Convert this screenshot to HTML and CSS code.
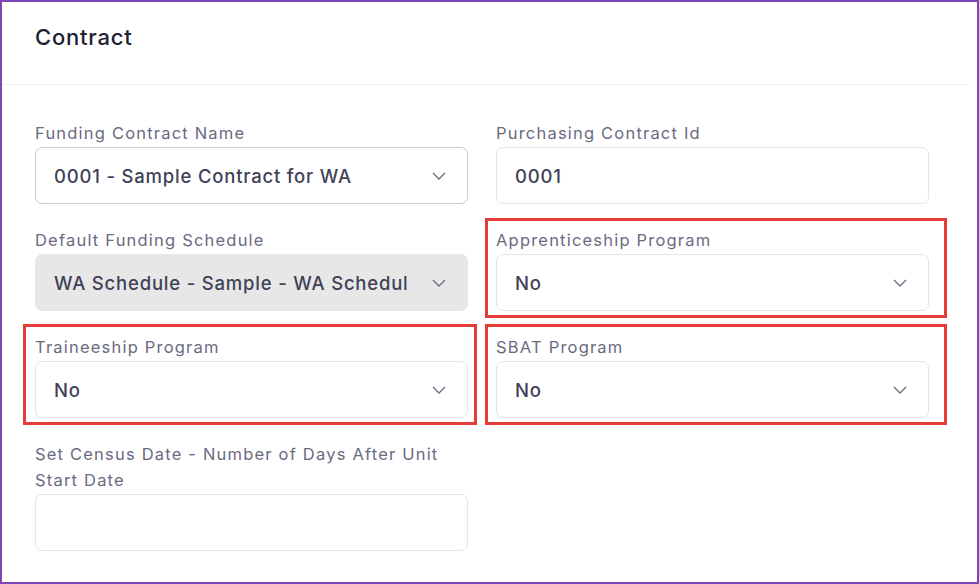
FILE: index.html
```html
<!DOCTYPE html>
<html>
<head>
<meta charset="utf-8">
<link rel="stylesheet" href="styles.css">
</head>
<body>
<div class="frame">
  <div class="header"><h1 class="title">Contract</h1></div>
  <div class="form">
    <div class="field">
      <div class="label">Funding Contract Name</div>
      <div class="control strong"><span class="value">0001 - Sample Contract for WA</span><svg class="chev" viewBox="0 0 14 8"><path d="M1 1l6 6 6-6"/></svg></div>
    </div>
    <div class="field">
      <div class="label">Purchasing Contract Id</div>
      <div class="control"><span class="value">0001</span></div>
    </div>
    <div class="field">
      <div class="label">Default Funding Schedule</div>
      <div class="control disabled"><span class="value">WA Schedule - Sample - WA Schedul</span><svg class="chev" viewBox="0 0 14 8"><path d="M1 1l6 6 6-6"/></svg></div>
    </div>
    <div class="field">
      <div class="label">Apprenticeship Program</div>
      <div class="control"><span class="value">No</span><svg class="chev" viewBox="0 0 14 8"><path d="M1 1l6 6 6-6"/></svg></div>
    </div>
    <div class="field">
      <div class="label">Traineeship Program</div>
      <div class="control"><span class="value">No</span><svg class="chev" viewBox="0 0 14 8"><path d="M1 1l6 6 6-6"/></svg></div>
    </div>
    <div class="field">
      <div class="label">SBAT Program</div>
      <div class="control"><span class="value">No</span><svg class="chev" viewBox="0 0 14 8"><path d="M1 1l6 6 6-6"/></svg></div>
    </div>
    <div class="field">
      <div class="label">Set Census Date - Number of Days After Unit Start Date</div>
      <div class="control"></div>
    </div>
  </div>
  <div class="mark mark-appr"></div>
  <div class="mark mark-train"></div>
  <div class="mark mark-sbat"></div>
</div>
</body>
</html>
```
FILE: styles.css
```css
* { box-sizing: border-box; }
html, body { margin: 0; padding: 0; background: #fff; }
body { font-family: Inter, "Noto Sans", sans-serif; }
.frame {
  position: relative;
  width: 979px;
  height: 584px;
  border: 2px solid #7d45b6;
  background: #fff;
  overflow: hidden;
}
.header {
  height: 83px;
  margin-right: 8px;
  border-bottom: 1px solid #f0f0f2;
  display: flex;
  align-items: center;
  padding-left: 33px;
  padding-bottom: 12px;
}
.title {
  margin: 0;
  font-size: 22px;
  font-weight: 500;
  color: #1c2033;
  letter-spacing: 0.8px;
}
.form {
  display: grid;
  grid-template-columns: 433px 433px;
  column-gap: 28px;
  row-gap: 23px;
  padding: 35px 0 0 33px;
}
.label {
  font-size: 16.5px;
  line-height: 26px;
  letter-spacing: 1.2px;
  color: #696b80;
  margin-bottom: 1px;
}
.control {
  height: 57px;
  border: 1px solid #e4e5ec;
  border-radius: 7px;
  display: flex;
  align-items: center;
  justify-content: space-between;
  padding: 0 21px 0 18px;
  background: #fff;
}
.control.strong { border-color: #c9cad3; }
.control.disabled { background: #e7e7e8; border-color: #e7e7e8; }
.value {
  font-size: 18.5px;
  letter-spacing: 0.8px;
  color: #3f4257;
  font-weight: 500;
  white-space: nowrap;
}
.chev {
  width: 14px;
  height: 8px;
  fill: none;
  stroke: #6b6e80;
  stroke-width: 1.4;
  flex: none;
}
.mark {
  position: absolute;
  border: 3px solid #e53c37;
}
.mark-appr { left: 483px; top: 216px; width: 462px; height: 100px; }
.mark-train { left: 21px; top: 322px; width: 454px; height: 101px; }
.mark-sbat { left: 483px; top: 322px; width: 462px; height: 101px; }
```
